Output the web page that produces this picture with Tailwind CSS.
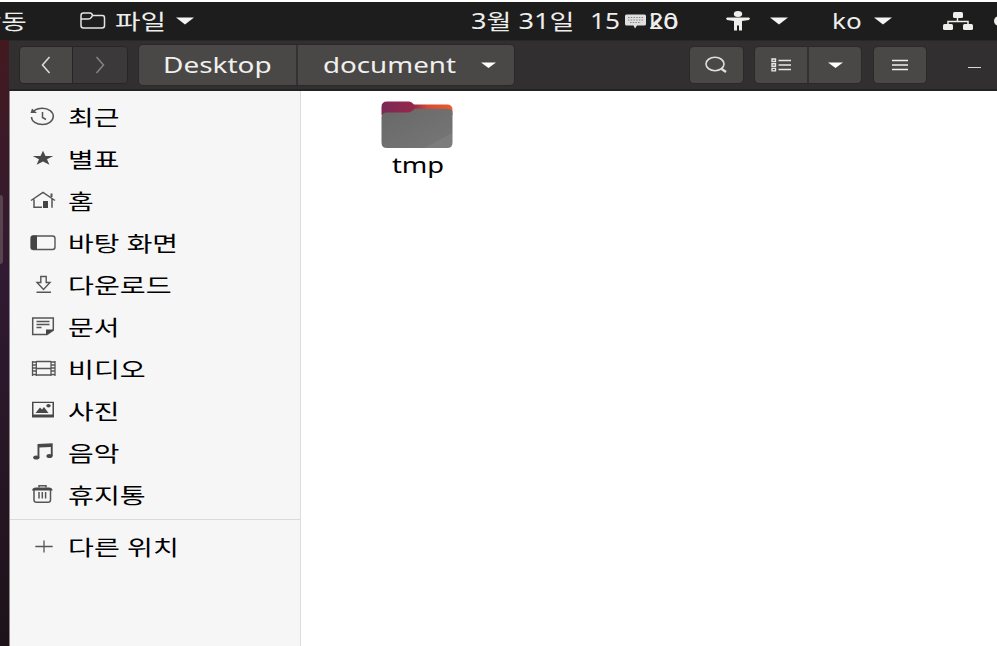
<!DOCTYPE html>
<html lang="ko">
<head>
<meta charset="utf-8">
<title>파일</title>
<script src="https://cdn.jsdelivr.net/npm/@tailwindcss/browser@4"></script>
</head>
<body class="w-[997px] h-[646px] overflow-hidden bg-white pt-[2px] font-['Noto_Sans','Noto_Sans_CJK_KR',sans-serif] text-[21px] leading-none whitespace-nowrap">
<div class="h-[644px] flex flex-col">
  <!-- top panel -->
  <header class="relative h-[38px] shrink-0 bg-[#1d1d1d] text-[#eeeeec] flex items-center overflow-hidden">
    <div class="w-[27px] flex justify-end overflow-hidden shrink-0"><span class="shrink-0 origin-right scale-x-[1.32] leading-[30px]">활동</span></div>
    <svg class="ml-[52px] w-[28px] h-[20px] shrink-0" viewBox="0 0 28 20" fill="none" stroke="#e4e4e2" stroke-width="1.5"><path d="M2 4.500Q2 2 4.500 2H11Q13 2 13.500 4.500H23.500Q25.500 4.500 25.500 7V14.500Q25.500 17 23 17H4.500Q2 17 2 14.500ZM2 8H9Q12 8 13.500 4.500"/></svg>
    <div class="ml-[8px] w-[61px] shrink-0"><span class="inline-block origin-left scale-x-[1.32] leading-[30px]">파일</span></div>
    <svg class="w-[18px] h-[8px] shrink-0" viewBox="0 0 18 8" fill="#f4f4f4"><path d="M0 .5H18L9 7.500Z"/></svg>
    <div class="ml-[277px] w-[255px] shrink-0 flex">
      <div class="w-[119px]"><span class="inline-block origin-left scale-x-[1.29] leading-[30px]">3월 31일</span></div>
      <div class="w-[59px]"><span class="inline-block origin-left scale-x-[1.25] leading-[30px]">15</span></div>
      <div><span class="inline-block origin-left scale-x-[1.2] leading-[30px]">20</span></div>
    </div>
    <svg class="w-[24px] h-[22px] shrink-0" viewBox="0 0 24 22" fill="#eeeeec"><ellipse cx="12" cy="4" rx="4.200" ry="3"/><path d="M0 8.500L1 7.500H23L24 8.500L23 10L16 11V20.500H13V15.500H11V20.500H8V11L1 10Z"/></svg>
    <svg class="ml-[20px] w-[18px] h-[8px] shrink-0" viewBox="0 0 18 8" fill="#f4f4f4"><path d="M0 .5H18L9 7.500Z"/></svg>
    <div class="ml-[44px] w-[42px] shrink-0"><span class="inline-block origin-left scale-x-[1.24] leading-[30px]">ko</span></div>
    <svg class="w-[18px] h-[8px] shrink-0" viewBox="0 0 18 8" fill="#f4f4f4"><path d="M0 .5H18L9 7.500Z"/></svg>
    <svg class="ml-[51px] w-[30px] h-[20px] shrink-0" viewBox="0 0 30 20" fill="#eeeeec"><rect x="10" y="1" width="10" height="6" rx="1.500"/><rect x="0" y="13" width="10" height="6" rx="1.500"/><rect x="20" y="13" width="10" height="6" rx="1.500"/><path d="M14.500 7V10.500M5 13V10.500H25V13" fill="none" stroke="#eeeeec" stroke-width="1.500"/></svg>
    <div class="ml-[21px] w-[12px] h-[10px] shrink-0 rounded-full bg-[#eeeeec]"></div>
    <!-- input method indicator over the clock -->
    <div class="absolute left-[624px] top-[4px] flex items-center">
      <svg class="w-[23px] h-[16px] mt-[2px]" viewBox="0 0 23 16"><path d="M2.500 .5H20.500Q22 .5 22 2V10Q22 11.500 20.500 11.500H13L11 14.500L9.500 11.500H2.500Q1 11.500 1 10V2Q1 .5 2.500 .5Z" fill="#e0dfdf"/><path d="M4 3.500H20M4 6H20M6 8.500H17" stroke="#858585" stroke-width="1" stroke-dasharray="1.500 1.200"/></svg>
      <span class="ml-[2px] inline-block origin-left scale-x-[1.24] leading-[30px]">ko</span>
    </div>
  </header>

  <div class="flex-1 min-h-0 flex">
    <!-- desktop strip with dock -->
    <div class="w-[9px] shrink-0 bg-linear-to-b from-[#43191f] via-[#301a32] via-40% to-[#1e1219] pt-[155px]">
      <div class="w-[3px] h-[69px] rounded-r-[3px] bg-[#58434f]"></div>
    </div>
    <div class="flex-1 min-w-0 flex flex-col">
      <!-- header bar -->
      <div class="h-[51px] shrink-0 bg-[#322f30] border-t border-t-[#292727] border-b-2 border-b-[#242222] flex items-center pl-[11px] text-[#f0f0ee]">
        <div class="flex h-[36px] w-[107px] rounded-[4px] overflow-hidden ring-1 ring-[#272526] shrink-0">
          <div class="w-[53px] bg-[#4a4846] border-r border-[#272526] flex items-center justify-center"><svg class="w-[10px] h-[18px]" viewBox="0 0 10 18" fill="none" stroke="#dededc" stroke-width="1.500"><path d="M8.500 1L1.500 9L8.500 17"/></svg></div>
          <div class="w-[54px] bg-[#3b393a] flex items-center justify-center"><svg class="w-[10px] h-[18px]" viewBox="0 0 10 18" fill="none" stroke="#858484" stroke-width="1.500"><path d="M1.500 1L8.500 9L1.500 17"/></svg></div>
        </div>
        <div class="ml-[12px] flex h-[40px] w-[375px] rounded-[4px] overflow-hidden ring-1 ring-[#2a2828] shrink-0 bg-[#4a4846]">
          <div class="w-[159px] border-r-2 border-[#333132] pl-[24px] flex items-center"><span class="origin-left scale-x-[1.33] leading-[30px]">Desktop</span></div>
          <div class="w-[216px] pl-[25px] flex items-center"><div class="w-[158px]"><span class="inline-block origin-left scale-x-[1.32] leading-[30px]">document</span></div>
            <svg class="w-[15px] h-[6px]" viewBox="0 0 15 6" fill="#fff"><path d="M0 .5H15L7.500 6Z"/></svg></div>
        </div>
        <div class="ml-[176px] h-[36px] w-[53px] rounded-[4px] ring-1 ring-[#2a2828] bg-[#4a4846] flex items-center justify-center shrink-0"><svg class="w-[24px] h-[18px]" viewBox="0 0 24 18" fill="none" stroke="#dededc" stroke-width="1.600"><ellipse cx="10" cy="8" rx="9" ry="6.700"/><path d="M16 12.500L21 16" stroke-width="2.400"/></svg></div>
        <div class="ml-[12px] flex h-[36px] w-[106px] rounded-[4px] overflow-hidden ring-1 ring-[#2a2828] shrink-0 bg-[#4a4846]">
          <div class="w-[54px] border-r-2 border-[#333132] flex items-center justify-center"><svg class="w-[20px] h-[14px]" viewBox="0 0 20 14" fill="none" stroke="#e6e6e4"><path d="M7.500 2.500H20M7.500 7H20M7.500 11.500H20" stroke-width="1.300"/><path d="M1 1H4.500V3.500H1ZM1 5.700H4.500V8.200H1ZM1 10.400H4.500V12.900H1Z" stroke-width="1.400"/></svg></div>
          <div class="w-[52px] flex items-center justify-center"><svg class="w-[15px] h-[6px]" viewBox="0 0 15 6" fill="#fff"><path d="M0 .5H15L7.500 6Z"/></svg></div>
        </div>
        <div class="ml-[13px] h-[36px] w-[52px] rounded-[4px] ring-1 ring-[#2a2828] bg-[#4a4846] flex items-center justify-center shrink-0"><svg class="w-[16px] h-[12px]" viewBox="0 0 16 12" fill="none" stroke="#eeeeec" stroke-width="1.300"><path d="M0 1.500H16M0 6H16M0 10.500H16"/></svg></div>
        <div class="ml-[42px] mt-[5px] w-[13px] h-px bg-[#d8d8d8] shrink-0"></div>
      </div>

      <div class="flex-1 min-h-0 flex border-l border-[#8a8889]">
        <!-- places -->
        <nav class="w-[291px] shrink-0 bg-[#f6f6f6] border-r border-[#dcdcdc] pt-[5px] text-black">
          <div class="h-[42px] pl-[18px] flex items-center gap-[12px]"><svg class="w-[28px] h-[24px]" viewBox="0 0 28 24" fill="none" stroke="#555" stroke-width="1.500"><path d="M5.500 6.200Q9 3.200 14.500 3.200C20.500 3.200 25.300 6.800 25.300 11.300S20.500 19.500 14.500 19.500S3.500 16.500 3.500 12"/><path d="M14.500 7V12.500L18 14.500"/><path d="M2.500 8L4 3.500L9 8Z" fill="#555" stroke="none"/></svg><span class="origin-left scale-x-[1.33] leading-[30px] mb-[1px]">최근</span></div>
          <div class="h-[42px] pl-[18px] flex items-center gap-[12px]"><svg class="w-[28px] h-[24px]" viewBox="0 0 28 24" fill="#484848"><path d="M15 3.700L17.500 9H25.300L19 12.300L21.400 17.700L15 14.500L8.600 17.700L11 12.300L4.700 9H12.500Z"/></svg><span class="origin-left scale-x-[1.33] leading-[30px] mb-[1px]">별표</span></div>
          <div class="h-[42px] pl-[18px] flex items-center gap-[12px]"><svg class="w-[28px] h-[24px]" viewBox="0 0 28 24" fill="none" stroke="#555" stroke-width="1.500"><path d="M3 11.500L15 3.500L27 11.500M6 10.500V18.300H14M24 10V18.800"/><path d="M15 12H20V19H15Z" fill="#444" stroke="none"/><path d="M23.500 4.500V8" stroke-width="2"/></svg><span class="origin-left scale-x-[1.33] leading-[30px] mb-[1px]">홈</span></div>
          <div class="h-[42px] pl-[18px] flex items-center gap-[12px]"><svg class="w-[28px] h-[24px]" viewBox="0 0 28 24"><rect x="3" y="5" width="24" height="13.500" rx="2.500" fill="none" stroke="#555" stroke-width="1.400"/><path d="M5 4.500H9V18.500H5Q3 18.500 3 16.500V6.500Q3 4.500 5 4.500Z" fill="#444"/></svg><span class="origin-left scale-x-[1.33] leading-[30px] mb-[1px]">바탕 화면</span></div>
          <div class="h-[42px] pl-[18px] flex items-center gap-[12px]"><svg class="w-[28px] h-[24px]" viewBox="0 0 28 24" fill="none" stroke="#555" stroke-width="1.400"><path d="M12.800 3.500H18.200V9.500H22L15.500 16.500L9 9.500H12.800ZM8.500 19.300H23"/></svg><span class="origin-left scale-x-[1.34] leading-[30px] mb-[1px]">다운로드</span></div>
          <div class="h-[42px] pl-[18px] flex items-center gap-[12px]"><svg class="w-[28px] h-[24px]" viewBox="0 0 28 24" fill="none" stroke="#555" stroke-width="1.500"><path d="M4.700 3H25.300V15L19 19.500H4.700Z"/><path d="M8.500 6.500H21.500M8.500 9.500H21.500M8.500 12.500H13.500" stroke-width="1.300"/><path d="M18 20V14.500H26Z" fill="#444" stroke="none"/></svg><span class="origin-left scale-x-[1.33] leading-[30px] mb-[1px]">문서</span></div>
          <div class="h-[42px] pl-[18px] flex items-center gap-[12px]"><svg class="w-[28px] h-[24px]" viewBox="0 0 28 24" fill="none" stroke="#555" stroke-width="1.300"><path d="M8.500 4.500H23M8.500 11.500H23M8.500 18H23M8.300 4V19M23 4V19M4.500 4V19M27 4V19"/><path d="M4.500 5H8.300M4.500 8H8.300M4.500 11H8.300M4.500 14H8.300M4.500 17.500H8.300M23 5H27M23 8H27M23 11H27M23 14H27M23 17.500H27"/></svg><span class="origin-left scale-x-[1.34] leading-[30px] mb-[1px]">비디오</span></div>
          <div class="h-[42px] pl-[18px] flex items-center gap-[12px]"><svg class="w-[28px] h-[24px]" viewBox="0 0 28 24" fill="#484848"><path fill-rule="evenodd" d="M4 2.700H26V18.500H4ZM5.500 4V15.500H24.500V4Z"/><path d="M7.500 14L12 8.500L14 10.500L16 8L20.500 14Z"/><ellipse cx="20.500" cy="6.800" rx="2.200" ry="1.700"/></svg><span class="origin-left scale-x-[1.33] leading-[30px] mb-[1px]">사진</span></div>
          <div class="h-[42px] pl-[18px] flex items-center gap-[12px]"><svg class="w-[28px] h-[24px]" viewBox="0 0 28 24" fill="#484848"><path d="M9.500 3L24.700 2.300V15H22.800V6L11.400 6.500V17H9.500Z"/><ellipse cx="8.300" cy="16.600" rx="3.100" ry="2"/><ellipse cx="21.500" cy="15" rx="3.100" ry="2"/></svg><span class="origin-left scale-x-[1.33] leading-[30px] mb-[1px]">음악</span></div>
          <div class="h-[42px] pl-[18px] flex items-center gap-[12px]"><svg class="w-[28px] h-[24px]" viewBox="0 0 28 24" fill="none" stroke="#555" stroke-width="1.500"><path d="M4 7.500Q4.500 4.500 8 4.500H21Q24 4.500 24.700 7.500Z" fill="#484848" stroke="none"/><path d="M11 4.500V2.700H18V4.500M6 7V17Q6 19.300 8.500 19.300H20Q22.500 19.300 22.500 17V7M11 9V15.500M14.300 9V15.500M17.600 9V15.500"/></svg><span class="origin-left scale-x-[1.34] leading-[30px] mb-[1px]">휴지통</span></div>
          <div class="mt-[3px] border-t border-[#dadada] pt-[6px]">
            <div class="h-[42px] pl-[18px] flex items-center gap-[12px]"><svg class="w-[28px] h-[24px]" viewBox="0 0 28 24" fill="none" stroke="#555" stroke-width="1.300"><path d="M7.300 11.500H24.700M16 5.500V17.500"/></svg><span class="origin-left scale-x-[1.34] leading-[30px] mb-[1px]">다른 위치</span></div>
          </div>
        </nav>
        <!-- files -->
        <main class="flex-1 bg-white pl-[79px] pt-[9px]">
          <div class="w-[74px] flex flex-col items-center">
            <svg class="w-[74px] h-[50px]" viewBox="0 0 74 50"><defs><linearGradient id="tab" x1="0" x2="1"><stop offset="0" stop-color="#7c2857"/><stop offset=".45" stop-color="#94284b"/><stop offset=".65" stop-color="#d84a34"/><stop offset="1" stop-color="#ee5b2a"/></linearGradient><linearGradient id="front" x1="0" y1="0" x2="1" y2="1"><stop offset="0" stop-color="#686868"/><stop offset=".8" stop-color="#747474"/><stop offset=".81" stop-color="#7c7c7c"/><stop offset="1" stop-color="#7c7c7c"/></linearGradient></defs><path d="M1.500 7Q1.500 1.500 7 1.500H29Q31.500 1.500 34 4.500H67Q72.500 4.500 72.500 10V15H1.500Z" fill="url(#tab)"/><path d="M1.500 17Q1.500 12.500 7 12.500H28Q31 12.500 35 8.800H67Q72.500 8.800 72.500 13V42.500Q72.500 48 67 48H7Q1.500 48 1.500 42.500Z" fill="url(#front)"/></svg>
            <span class="ml-[2px] scale-x-[1.3] leading-[30px] text-black">tmp</span>
          </div>
        </main>
      </div>
    </div>
  </div>
</div>
</body>
</html>
